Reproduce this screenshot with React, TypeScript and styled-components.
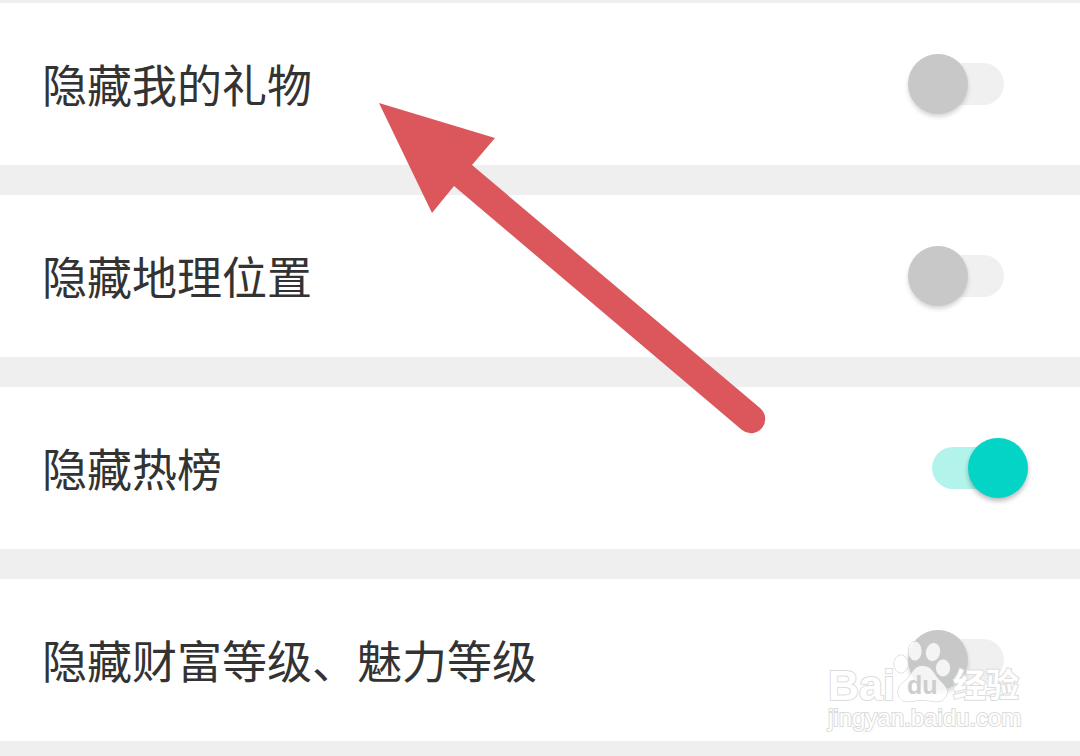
import React, { useState } from "react";
import styled, { createGlobalStyle } from "styled-components";

const GlobalStyle = createGlobalStyle`
  * { box-sizing: border-box; }
  body {
    margin: 0;
    background: #efefef;
    color: #333;
    font-family: "Noto Sans CJK SC", sans-serif;
  }
`;

const Page = styled.main`
  position: relative;
  min-height: 100vh;
  padding: 3px 0 14px;
  overflow: hidden;
`;

const SettingsList = styled.ul`
  display: flex;
  flex-direction: column;
  gap: 30px;
  margin: 0;
  padding: 0;
  list-style: none;
`;

const SettingItem = styled.li`
  position: relative;
`;

const SettingRow = styled.label`
  display: flex;
  align-items: center;
  justify-content: space-between;
  padding: 51px 52px 51px 42px;
  background: #fff;
  cursor: pointer;
`;

const SettingName = styled.span`
  font-size: 45px;
  line-height: 60px;
`;

const Switch = styled.input.attrs({ type: "checkbox", role: "switch" })`
  appearance: none;
  display: flex;
  flex: none;
  align-items: center;
  width: 120px;
  height: 60px;
  margin: 0;
  padding: 0 24px;
  cursor: pointer;

  &::before {
    content: "";
    flex: none;
    width: 72px;
    height: 42px;
    border-radius: 21px;
    background: #f0f0f0;
  }

  &::after {
    content: "";
    flex: none;
    width: 60px;
    height: 60px;
    margin-left: -96px;
    border-radius: 50%;
    background: #c8c8c8;
    box-shadow: 0 3px 4px rgba(0, 0, 0, 0.16);
  }

  &:checked::before {
    background: #b2f4ec;
  }

  &:checked::after {
    margin-left: -36px;
    background: #03d4c5;
    box-shadow: 0 3px 5px rgba(0, 0, 0, 0.28);
  }
`;

const Arrow = styled.svg`
  position: absolute;
  top: 100px;
  left: 376px;
  width: 392px;
  height: 336px;
  pointer-events: none;
`;

const Watermark = styled.div`
  position: absolute;
  right: 58px;
  bottom: 9px;
  width: 194px;
  color: #fff;
  font-family: "Liberation Sans", "Noto Sans CJK SC", sans-serif;
  paint-order: stroke fill;
  -webkit-text-stroke: 2px #dcdcdc;
  pointer-events: none;
`;

const Brand = styled.div`
  display: flex;
  align-items: flex-end;
  height: 64px;
  font-weight: 700;
  white-space: nowrap;
`;

const BrandLatin = styled.span`
  width: 64px;
  font-size: 43px;
  line-height: 38px;
`;

const BrandChinese = styled.span`
  margin-left: 8px;
  font-size: 33px;
  line-height: 36px;
`;

const PawMark = styled.svg`
  flex: none;
  width: 53px;
  height: 64px;
  overflow: visible;
`;

const PawText = styled.text`
  fill: #cdcdcd;
  stroke: none;
  font-family: "Liberation Sans", sans-serif;
  font-size: 25px;
  font-weight: 700;
  -webkit-text-stroke: 0;
`;

const SiteName = styled.div`
  font-size: 24px;
  line-height: 28px;
  white-space: nowrap;
`;

function Paw() {
  return (
    <PawMark viewBox="0 0 53 64" aria-hidden="true">
      <g fill="#fff" fillOpacity="0.8" stroke="#cfcfcf" strokeWidth="1">
        <ellipse cx="9" cy="24" rx="7" ry="9" />
        <ellipse cx="23" cy="11" rx="6.5" ry="9.5" />
        <ellipse cx="41" cy="12" rx="7" ry="9" transform="rotate(12 41 12)" />
        <ellipse cx="51" cy="28" rx="7" ry="8.5" />
        <path d="M30 26C22 26 21 33 16 38C11 43 5 46 6 53C7 61 14 63 21 61C27 60 33 60 39 61C46 63 54 61 55 53C56 46 48 42 44 36C40 30 38 26 30 26Z" />
      </g>
      <PawText x="15" y="54">du</PawText>
    </PawMark>
  );
}

const initialSettings = [
  { name: "隐藏我的礼物", on: false },
  { name: "隐藏地理位置", on: false },
  { name: "隐藏热榜", on: true },
  { name: "隐藏财富等级、魅力等级", on: false },
];

export default function App() {
  const [settings, setSettings] = useState(initialSettings);

  const toggle = (name: string) =>
    setSettings((items) =>
      items.map((item) => (item.name === name ? { ...item, on: !item.on } : item)),
    );

  return (
    <Page>
      <GlobalStyle />
      <SettingsList>
        {settings.map(({ name, on }, index) => (
          <SettingItem key={name}>
            <SettingRow>
              <SettingName>{name}</SettingName>
              <Switch checked={on} onChange={() => toggle(name)} />
            </SettingRow>
            {index === settings.length - 1 && (
              <Watermark>
                <Brand>
                  <BrandLatin>Bai</BrandLatin>
                  <Paw />
                  <BrandChinese>经验</BrandChinese>
                </Brand>
                <SiteName>jingyan.baidu.com</SiteName>
              </Watermark>
            )}
          </SettingItem>
        ))}
      </SettingsList>
      <Arrow viewBox="376 100 392 336" aria-hidden="true">
        <path
          fill="#db575c"
          d="M379 103L495 138L472 165L760 408A14 14 0 0 1 742 430L454 186L432 213Z"
        />
      </Arrow>
    </Page>
  );
}
